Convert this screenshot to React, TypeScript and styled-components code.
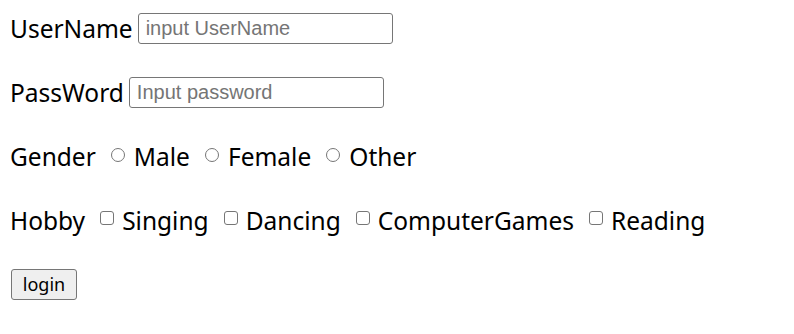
import { FC } from 'react'
import styled, { createGlobalStyle } from 'styled-components'

const GlobalStyle = createGlobalStyle`
  html, body {
    margin: 0;
    padding: 0;
    background: #fff;
  }
  body {
    font-family: 'Noto Sans', 'Liberation Sans', sans-serif;
    color: #000;
  }
`

const hobbies = ['Singing', 'Dancing', 'ComputerGames', 'Reading']
const genders = ['Male', 'Female', 'Other']

export const App: FC = () => {
  return (
    <>
      <GlobalStyle />
      <StyleForm onSubmit={e => e.preventDefault()}>
        <Row>
          <Label htmlFor={'username'}>UserName</Label>
          <TextInput id={'username'} placeholder={'input UserName'} type={'text'} />
        </Row>
        <Row>
          <Label htmlFor={'password'}>PassWord</Label>
          <TextInput id={'password'} placeholder={'Input password'} type={'password'} />
        </Row>
        <Row>
          <Label as={'span'}>Gender</Label>
          {genders.map(g => (
            <Option key={g}>
              <Radio name={'gender'} type={'radio'} value={g} />
              {g}
            </Option>
          ))}
        </Row>
        <Row>
          <Label as={'span'}>Hobby</Label>
          {hobbies.map(h => (
            <Option key={h}>
              <Check type={'checkbox'} value={h} />
              {h}
            </Option>
          ))}
        </Row>
        <Row>
          <LoginButton type={'submit'}>login</LoginButton>
        </Row>
      </StyleForm>
    </>
  )
}

export default App

const StyleForm = styled.form`
  padding: 12px 0 0 10px;
  display: flex;
  flex-direction: column;
  gap: 32px;
`
const Row = styled.div`
  height: 32px;
  display: flex;
  align-items: center;
  font-size: 24.5px;
`
const Label = styled.label`
  margin-right: 5px;
  white-space: nowrap;
`
const TextInput = styled.input`
  box-sizing: border-box;
  width: 255px;
  height: 31px;
  padding: 1px 7px;
  border: 1px solid #767676;
  border-radius: 3px;
  font-family: 'Liberation Sans', Arial, sans-serif;
  font-size: 20px;
  color: #000;
  outline: none;

  &::placeholder {
    color: #757575;
  }
`
const Option = styled.label`
  display: flex;
  align-items: center;
  margin-left: 10px;
  white-space: nowrap;

  & + & {
    margin-left: 15px;
  }
`
const Radio = styled.input`
  appearance: none;
  box-sizing: border-box;
  width: 14px;
  height: 14px;
  margin: 0 9px 2px 0;
  border: 1px solid #767676;
  border-radius: 50%;
  background: #fff;
`
const Check = styled.input`
  appearance: none;
  box-sizing: border-box;
  width: 14px;
  height: 14px;
  margin: 0 8px 4px 0;
  border: 1px solid #767676;
  border-radius: 3px;
  background: #fff;
`
const LoginButton = styled.button`
  box-sizing: border-box;
  width: 66px;
  height: 31px;
  margin-left: 1px;
  padding: 0;
  border: 1px solid #767676;
  border-radius: 3px;
  background: #efefef;
  font-family: 'Noto Sans', 'Liberation Sans', sans-serif;
  font-size: 18px;
  color: #000;
`
